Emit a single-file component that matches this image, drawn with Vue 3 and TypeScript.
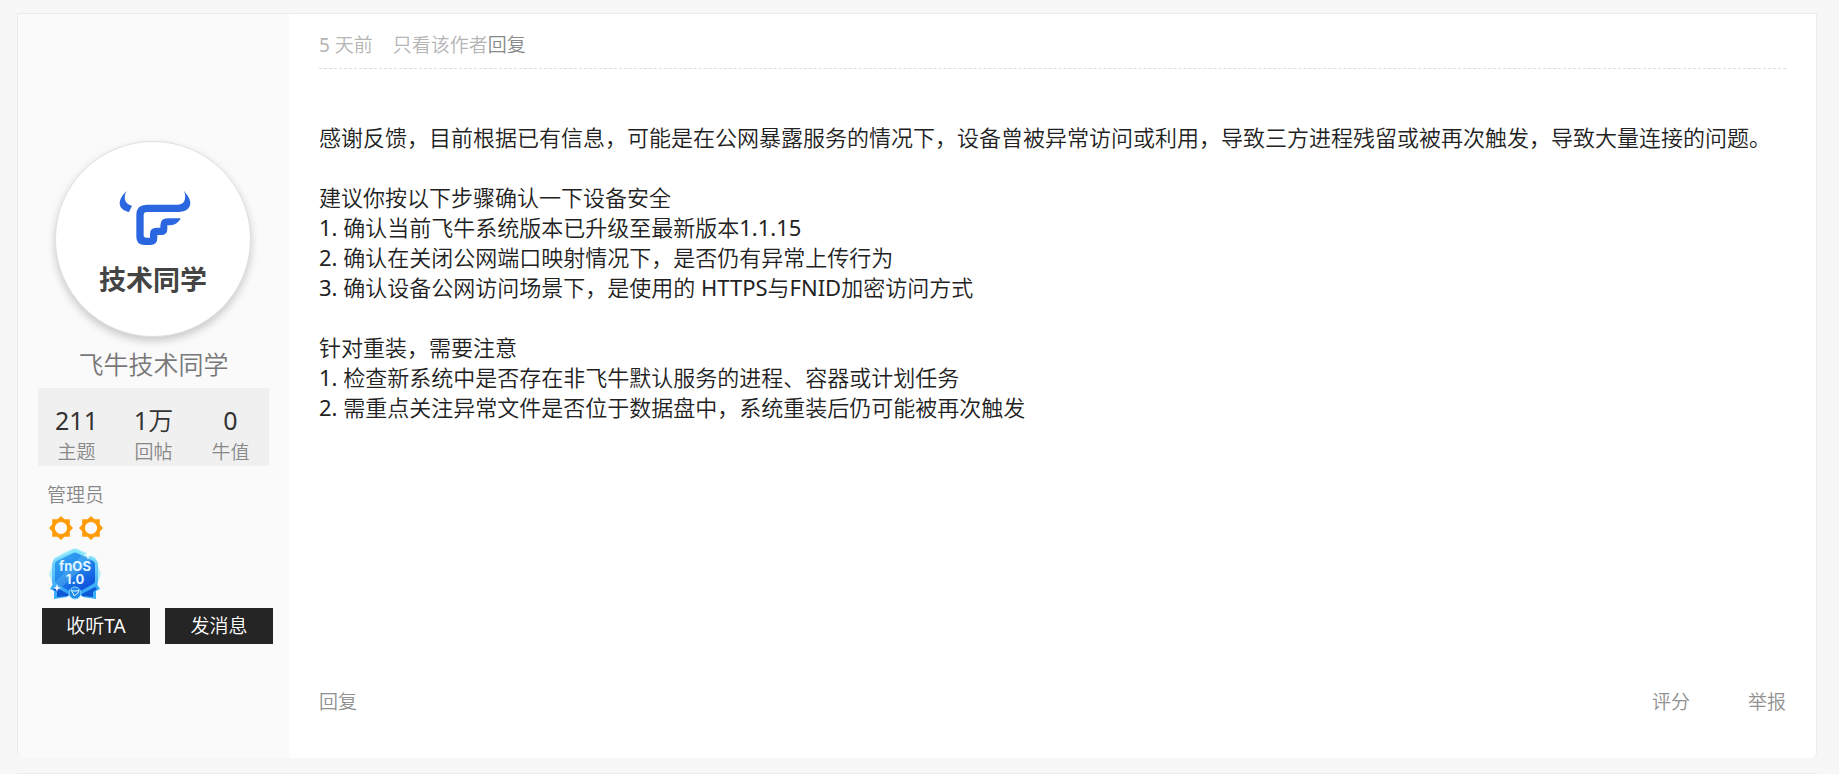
<script setup lang="ts">
interface Stat {
  value: string
  label: string
}

const stats: Stat[] = [
  { value: '211', label: '主题' },
  { value: '1万', label: '回帖' },
  { value: '0', label: '牛值' },
]

const paragraphs: string[][] = [
  [
    '感谢反馈，目前根据已有信息，可能是在公网暴露服务的情况下，设备曾被异常访问或利用，导致三方进程残留或被再次触发，导致大量连接的问题。',
  ],
  [
    '建议你按以下步骤确认一下设备安全',
    '1. 确认当前飞牛系统版本已升级至最新版本1.1.15',
    '2. 确认在关闭公网端口映射情况下，是否仍有异常上传行为',
    '3. 确认设备公网访问场景下，是使用的 HTTPS与FNID加密访问方式',
  ],
  [
    '针对重装，需要注意',
    '1. 检查新系统中是否存在非飞牛默认服务的进程、容器或计划任务',
    '2. 需重点关注异常文件是否位于数据盘中，系统重装后仍可能被再次触发',
  ],
]
</script>

<template>
  <main class="thread">
    <article class="post">
      <aside class="author">
        <a class="avatar" href="#">
          <svg class="logo" viewBox="0 0 216 168" aria-hidden="true">
            <path d="M23 2C14 11 3 24 2 39C2 53 13 63 30 66L39 47C29 45 21 39 18 30C16 20 18 10 23 2Z" />
            <path
              d="M194 2C200 12 200 24 196 33C192 41 185 44 175 44H83Q52 44 52 75V140Q52 165 77 165H94Q115 165 115 144V135H126Q145 135 145 117V106H153C168 106 180 96 185 85H146Q124 85 124 107V113H113Q93 113 93 132V143H82Q74 143 74 135V76Q74 66 84 66H178C201 66 214 54 214 39C213 24 203 12 194 2Z"
            />
          </svg>
          <span class="avatar-text">技术同学</span>
        </a>
        <a class="name" href="#">飞牛技术同学</a>
        <dl class="stats">
          <div v-for="s in stats" :key="s.label" class="stat">
            <dt>{{ s.label }}</dt>
            <dd>{{ s.value }}</dd>
          </div>
        </dl>
        <a class="role" href="#">管理员</a>
        <div class="suns">
          <svg v-for="n in 2" :key="n" viewBox="0 0 24 24" aria-hidden="true">
            <path
              fill-rule="evenodd"
              d="M12 0L15.5 3.2H20.8V8.5L24 12L20.8 15.5V20.8H15.5L12 24L8.5 20.8H3.2V15.5L0 12L3.2 8.5V3.2H8.5ZM12 5.9A6.1 6.1 0 1 0 12 18.1A6.1 6.1 0 1 0 12 5.9Z"
            />
          </svg>
        </div>
        <svg class="badge" viewBox="0 0 52 52" role="img" aria-label="fnOS 1.0">
          <defs>
            <linearGradient id="badge-face" x1="0" y1="0" x2="0.6" y2="1">
              <stop offset="0" stop-color="#3ba9f2" />
              <stop offset="0.5" stop-color="#218bed" />
              <stop offset="1" stop-color="#0d4fdc" />
            </linearGradient>
            <linearGradient id="badge-rim" x1="0" y1="0" x2="0" y2="1">
              <stop offset="0" stop-color="#8ce9fb" />
              <stop offset="1" stop-color="#2a9cf5" />
            </linearGradient>
          </defs>
          <path
            d="M26 0L36 4L47 10L49 18L52 26L49 34L44 42H8L3 34L0 26L3 18L5 10L16 4Z"
            fill="#b5effb"
          />
          <path d="M4 36L1 41L5 43L5 51L18 49L24 43ZM48 36L51 41L47 43L47 51L34 49L28 43Z" fill="#38aef6" />
          <path d="M6 39L4 41L8 44L8 49L19 48L22 42ZM46 39L48 41L44 44L44 49L33 48L30 42Z" fill="#0c58d7" />
          <path
            d="M23 2Q26 0 29 2L46 11Q49 13 49 16V34Q49 37 46 39L29 48Q26 50 23 48L6 39Q3 37 3 34V16Q3 13 6 11Z"
            fill="url(#badge-rim)"
          />
          <path
            d="M24 5Q26 4 28 5L44 13Q46 14 46 16V33Q46 35 44 36L28 45Q26 46 24 45L8 36Q6 35 6 33V16Q6 14 8 13Z"
            fill="url(#badge-face)"
          />
          <path d="M6 34L33 7L42 12L13 39L8 36Z" fill="#7cc9fa" opacity="0.3" />
          <path d="M39 2L40 6L44 7L40 8L39 12L38 8L34 7L38 6ZM8 36L9 39L12 40L9 41L8 44L7 41L4 40L7 39Z" fill="#fff" />
          <circle cx="26" cy="45" r="6" fill="#218ae9" stroke="#7bd5fb" />
          <path d="M22 42L24 43H28L30 42L29 45L25 48L24 45Z" fill="none" stroke="#d9f6ff" />
          <text x="26" y="23" text-anchor="middle">fnOS</text>
          <text x="26" y="36" text-anchor="middle">1.0</text>
        </svg>
        <div class="actions">
          <button type="button">收听TA</button>
          <button type="button">发消息</button>
        </div>
      </aside>

      <section class="content">
        <header class="meta">
          <time>5 天前</time>
          <a class="only" href="#">只看该作者</a><a class="reply" href="#">回复</a>
        </header>
        <div class="message">
          <p v-for="(lines, i) in paragraphs" :key="i">
            <template v-for="(line, j) in lines" :key="j"><br v-if="j > 0" />{{ line }}</template>
          </p>
        </div>
        <footer class="tools">
          <a href="#">回复</a>
          <a class="push" href="#">评分</a>
          <a href="#">举报</a>
        </footer>
      </section>
    </article>
    <div class="next-post"></div>
  </main>
</template>

<style>
body {
  margin: 0;
  background: #f7f7f7;
}
</style>

<style scoped>
.thread {
  padding: 13px 22px 0 17px;
  font-family: 'Noto Sans', 'Noto Sans CJK SC DemiLight', 'Noto Sans CJK SC', sans-serif;
  font-size: 19px;
  line-height: 28px;
  font-weight: 400;
  color: #222;
}

a {
  color: inherit;
  text-decoration: none;
}

.post {
  display: flex;
  border: 1px solid #ebebeb;
  border-bottom: 0;
  border-radius: 0 0 6px 6px;
  background: #fff;
  overflow: hidden;
}

.author {
  box-sizing: border-box;
  flex: none;
  width: 271px;
  padding: 127px 16px 114px 20px;
  background: #fafafa;
  color: #888;
}

.avatar {
  display: flex;
  box-sizing: border-box;
  flex-direction: column;
  align-items: center;
  width: 196px;
  height: 196px;
  margin-left: 17px;
  padding-top: 48px;
  border: 1px solid #e0e0e0;
  border-radius: 50%;
  background: #fff;
  box-shadow: 0 4px 8px rgba(0, 0, 0, 0.2);
}

.logo {
  width: 72px;
  height: 56px;
  margin-left: 4px;
  fill: #2a66df;
}

.avatar-text {
  margin-top: 13px;
  font-family: 'Noto Sans CJK SC', sans-serif;
  font-size: 27px;
  line-height: 40px;
  font-weight: 700;
  color: #444;
}

.name {
  display: block;
  margin: 10px 4px 7px 0;
  font-size: 25px;
  line-height: 34px;
  text-align: center;
  color: #777;
}

.stats {
  display: flex;
  margin: 0 4px 0 0;
  padding-top: 15px;
  background: #f0f0f0;
  text-align: center;
}

.stat {
  display: flex;
  flex: 1;
  flex-direction: column-reverse;
}

.stat dd {
  margin: 0;
  font-size: 25px;
  line-height: 35px;
  color: #333;
}

.role {
  display: block;
  margin: 15px 0 0 9px;
}

.suns {
  display: flex;
  gap: 6px;
  margin: 7px 0 0 11px;
}

.suns svg {
  width: 24px;
  height: 24px;
  fill: #ff9c07;
}

.badge {
  display: block;
  width: 52px;
  height: 52px;
  margin: 8px 0 0 11px;
}

.badge text {
  font-family: Inter, sans-serif;
  font-size: 13px;
  font-weight: 700;
  fill: #e4f7ff;
}

.actions {
  display: flex;
  gap: 15px;
  margin: 8px 0 0 4px;
}

.actions button {
  flex: 1;
  height: 36px;
  padding: 0;
  border: 0;
  background: #252525;
  color: #fff;
  font: inherit;
}

.content {
  display: flex;
  flex: 1;
  flex-direction: column;
  min-width: 0;
  padding: 17px 30px 42px;
}

.meta {
  display: flex;
  padding-bottom: 9px;
  border-bottom: 1px dashed #ddd;
  color: #b5b5b5;
}

.only {
  margin-left: 20px;
}

.reply {
  color: #888;
}

.message {
  flex: 1;
  padding-top: 53px;
  font-size: 22px;
  line-height: 30px;
}

.message p {
  margin: 0 0 30px;
}

.tools {
  display: flex;
  gap: 58px;
  color: #909090;
}

.push {
  margin-left: auto;
}

.next-post {
  margin-top: 15px;
  border-top: 1px solid #ebebeb;
}
</style>
